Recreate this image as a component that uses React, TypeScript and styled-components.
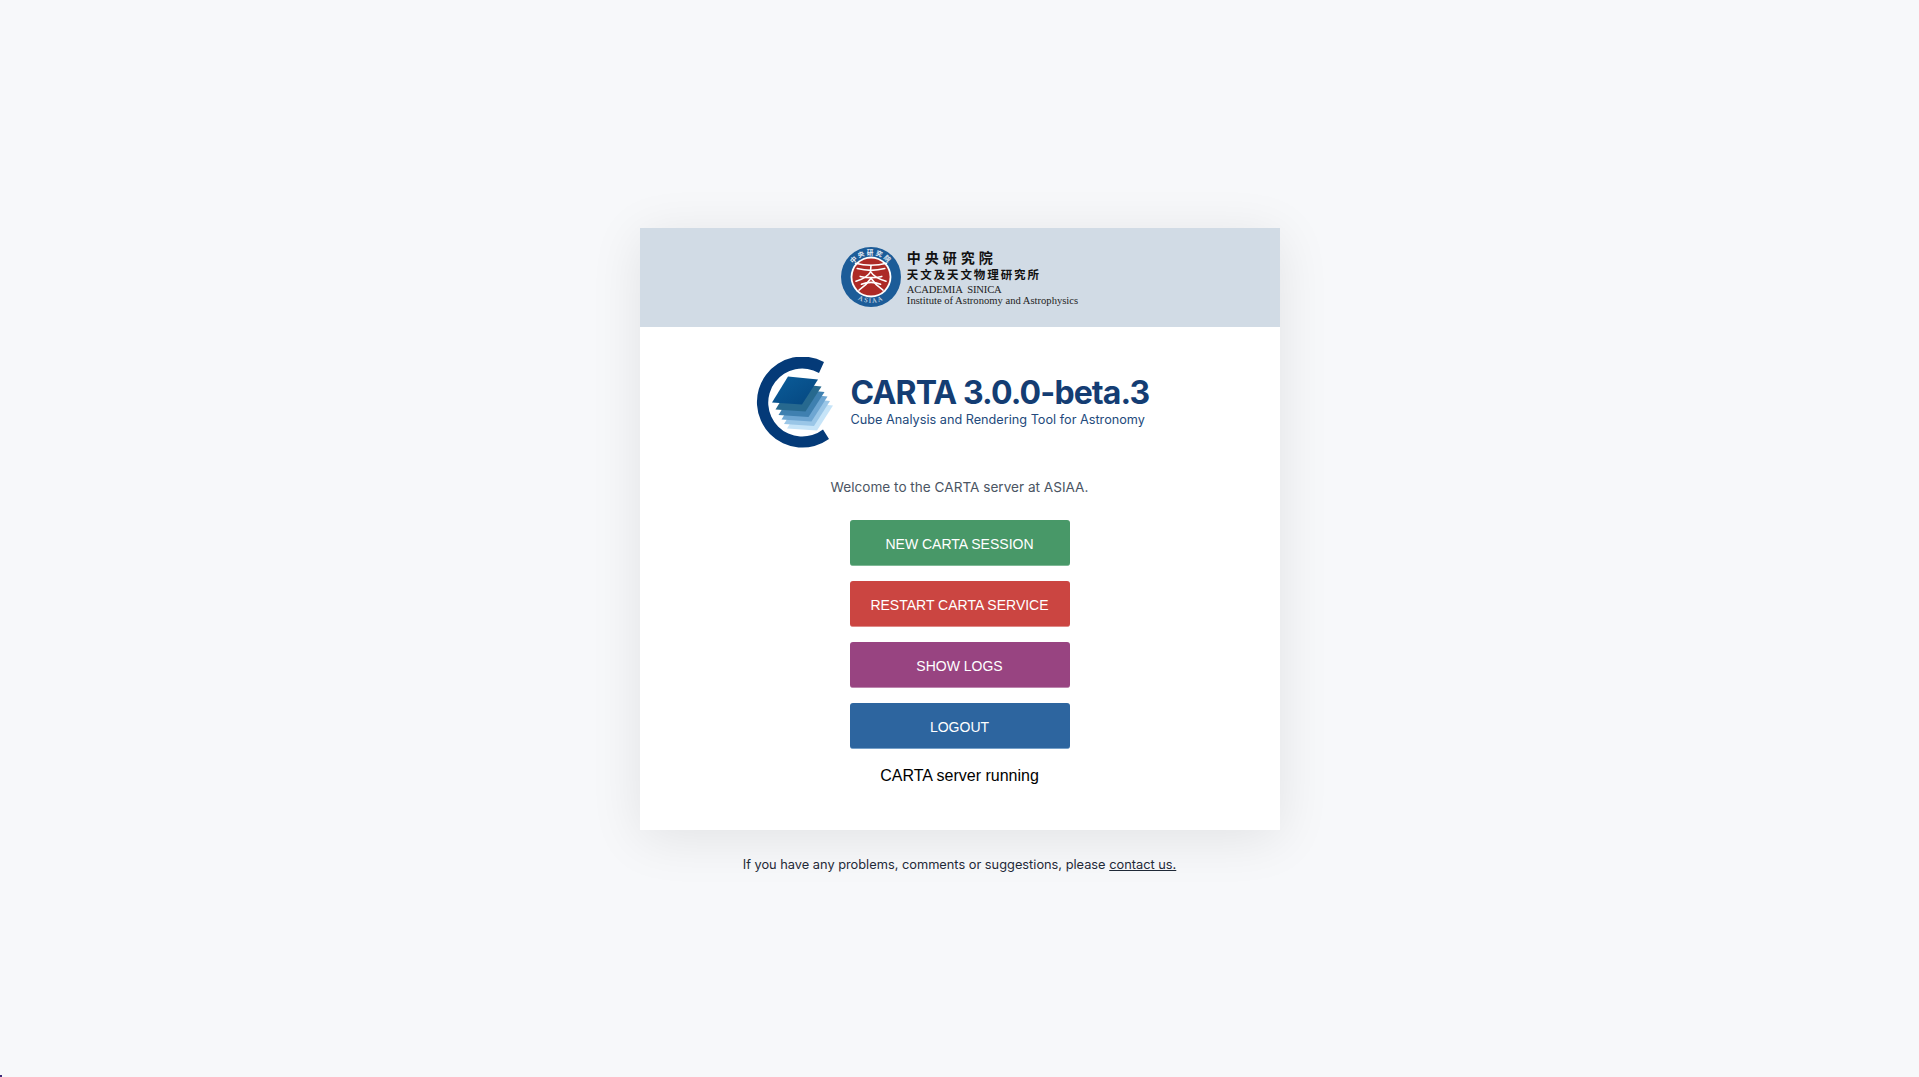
import React from "react";
import styled, { createGlobalStyle } from "styled-components";

const Global = createGlobalStyle`
  html, body { margin: 0; padding: 0; background: #f7f8fa; }
  body { font-family: "Inter", "Liberation Sans", sans-serif; }
`;

const Page = styled.main`
  min-height: 1077px;
  box-sizing: border-box;
  padding-top: 228px;
  display: flex;
  flex-direction: column;
  align-items: center;
  overflow: hidden;
`;

const Card = styled.section`
  width: 640px;
  height: 602px;
  background: #fff;
  box-shadow: 0 8px 50px rgba(0, 0, 0, 0.09);
  display: flex;
  flex-direction: column;
`;

const Banner = styled.header`
  height: 99px;
  box-sizing: border-box;
  padding-top: 19px;
  background: #d1dbe5;
  display: flex;
  justify-content: center;
  align-items: flex-start;
  gap: 6px;
`;

const InstituteText = styled.div`
  margin-top: 2px;
  color: #111;
  display: flex;
  flex-direction: column;
`;

const ChineseName = styled.div<{ $size: number; $spacing: number; $height: number }>`
  font-family: "Noto Sans CJK TC", "Liberation Serif", serif;
  font-weight: 700;
  font-size: ${(p) => p.$size}px;
  letter-spacing: ${(p) => p.$spacing}px;
  line-height: ${(p) => p.$height}px;
  white-space: nowrap;
`;

const EnglishName = styled.div<{ $spacing?: number; $gap?: number }>`
  font-family: "Liberation Serif", serif;
  font-size: 10.6px;
  line-height: 11px;
  margin-top: ${(p) => p.$gap ?? 0}px;
  letter-spacing: ${(p) => p.$spacing ?? 0}px;
  white-space: pre;
  color: #222;
`;

const Body = styled.div`
  flex: 1;
  display: flex;
  flex-direction: column;
  align-items: center;
`;

const Brand = styled.div`
  margin-top: 30px;
  height: 90px;
  display: flex;
  align-items: flex-start;
  justify-content: center;
  gap: 11px;
  padding-right: 14px;
`;

const BrandText = styled.div`
  margin-top: 16.5px;
  display: flex;
  flex-direction: column;
`;

const Title = styled.h1`
  margin: 0;
  font-size: 32px;
  line-height: 38px;
  letter-spacing: -0.88px;
  font-weight: 700;
  color: #143d73;
  white-space: nowrap;
`;

const Subtitle = styled.div`
  font-size: 12.7px;
  line-height: 16px;
  margin-top: 0.5px;
  color: #234a7c;
  white-space: nowrap;
`;

const Welcome = styled.p`
  margin: 30px 0 0;
  font-size: 13.6px;
  line-height: 20px;
  color: #4b5563;
`;

const Actions = styled.div`
  margin-top: 23px;
  display: flex;
  flex-direction: column;
  gap: 15px;
`;

const ActionButton = styled.button<{ $color: string; $edge: string }>`
  width: 220px;
  height: 46px;
  padding: 2px 0 0;
  border: 0;
  border-bottom: 1px solid ${(p) => p.$edge};
  border-radius: 3px;
  background: ${(p) => p.$color};
  color: #fff;
  font-family: "Liberation Sans", Arial, sans-serif;
  font-size: 14px;
  cursor: pointer;
`;

const Status = styled.div`
  margin-top: 14.5px;
  font-family: "Liberation Sans", Arial, sans-serif;
  font-size: 16px;
  line-height: 24px;
  color: #000;
`;

const Footer = styled.p`
  margin: 25.5px 0 0;
  font-size: 12.8px;
  line-height: 18px;
  color: #1f2937;
  white-space: nowrap;
`;

const ContactLink = styled.a`
  color: #1f2937;
  text-decoration: underline;
`;

const CornerMark = styled.div`
  position: fixed;
  left: 0;
  bottom: 0;
  width: 2px;
  height: 2px;
  background: #3b2a78;
`;

const Seal = () => (
  <svg width="60" height="60" viewBox="0 0 50 50" aria-hidden="true">
    <defs>
      <path id="sealTop" d="M6.5 25a18.5 18.5 0 0 1 37 0" />
      <path id="sealBottom" d="M3.5 25a21.5 21.5 0 0 0 43 0" />
    </defs>
    <circle cx="25" cy="25" r="25" fill="#1c5c98" />
    <circle cx="25" cy="25" r="17" fill="#fff" />
    <circle cx="25" cy="25" r="15.500" fill="#ad2a26" />
    <g fill="none" stroke="#fff" strokeWidth="1.300" strokeLinecap="round">
      <path d="M12 13.500q13 3.500 26 0" />
      <path d="M13.500 18q11.500 3 23 0" />
      <path d="M25 15.500 24.500 21q-3 5-12 7.500" />
      <path d="M25 21q3 5 12.500 7.500" />
      <path d="M16 24.500q9 2 18 0" />
      <path d="M25 26q-4 6-10 10" />
      <path d="M25 26q4 6 10 10" />
      <path d="M17 31q8-3 16 0" />
    </g>
    <text fontSize="5.500" fontWeight="700" fill="#e9eef5" fontFamily="Noto Sans CJK TC, sans-serif" letterSpacing="1.500">
      <textPath href="#sealTop" startOffset="50%" textAnchor="middle">中央研究院</textPath>
    </text>
    <text fontSize="5.500" fill="#e9eef5" fontFamily="Liberation Serif, serif" letterSpacing="1.200">
      <textPath href="#sealBottom" startOffset="50%" textAnchor="middle">ASIAA</textPath>
    </text>
  </svg>
);

const layers = [
  { x: 15, y: 26, fill: "#c6e4f8" },
  { x: 12, y: 21.500, fill: "#9ac6e7" },
  { x: 9.500, y: 17, fill: "#6ea6d2" },
  { x: 6.500, y: 12.500, fill: "#3f80b0" },
  { x: 3.500, y: 7, fill: "#27698f" },
];

const CartaLogo = () => (
  <svg width="84" height="92" viewBox="756 357 84 92" aria-hidden="true">
    <defs>
      <linearGradient id="topSheet" x1="0" y1="0" x2="1" y2="1">
        <stop offset="0" stopColor="#0b5d9a" />
        <stop offset="1" stopColor="#05467f" />
      </linearGradient>
    </defs>
    <path
      d="M824 362A45.500 45.500 0 1 0 829 439L823 429.500A34 34 0 1 1 819 373Z"
      fill="#043a78"
    />
    <g transform="translate(0 1.500)">
      {layers.map((l) => (
        <polygon
          key={l.fill}
          points="788,375 818,378 802,403 772,401"
          fill={l.fill}
          transform={`translate(${l.x} ${l.y})`}
        />
      ))}
      <polygon points="788,375 818,378 802,403 772,401" fill="url(#topSheet)" />
    </g>
  </svg>
);

export default function App() {
  return (
    <>
      <Global />
      <Page>
        <Card>
          <Banner>
            <Seal />
            <InstituteText>
              <ChineseName $size={14} $spacing={4} $height={17}>中央研究院</ChineseName>
              <ChineseName $size={11.500} $spacing={1.900} $height={16}>天文及天文物理研究所</ChineseName>
              <EnglishName $spacing={-0.150} $gap={2}>{"ACADEMIA  SINICA"}</EnglishName>
              <EnglishName>Institute of Astronomy and Astrophysics</EnglishName>
            </InstituteText>
          </Banner>
          <Body>
            <Brand>
              <CartaLogo />
              <BrandText>
                <Title>CARTA 3.0.0-beta.3</Title>
                <Subtitle>Cube Analysis and Rendering Tool for Astronomy</Subtitle>
              </BrandText>
            </Brand>
            <Welcome>Welcome to the CARTA server at ASIAA.</Welcome>
            <Actions>
              <ActionButton $color="#489868" $edge="#7fb996">NEW CARTA SESSION</ActionButton>
              <ActionButton $color="#cb4541" $edge="#de8a87">RESTART CARTA SERVICE</ActionButton>
              <ActionButton $color="#984481" $edge="#bd86ae">SHOW LOGS</ActionButton>
              <ActionButton $color="#2d659f" $edge="#76a0c9">LOGOUT</ActionButton>
            </Actions>
            <Status>CARTA server running</Status>
          </Body>
        </Card>
        <Footer>
          If you have any problems, comments or suggestions, please <ContactLink href="#">contact us.</ContactLink>
        </Footer>
        <CornerMark />
      </Page>
    </>
  );
}
